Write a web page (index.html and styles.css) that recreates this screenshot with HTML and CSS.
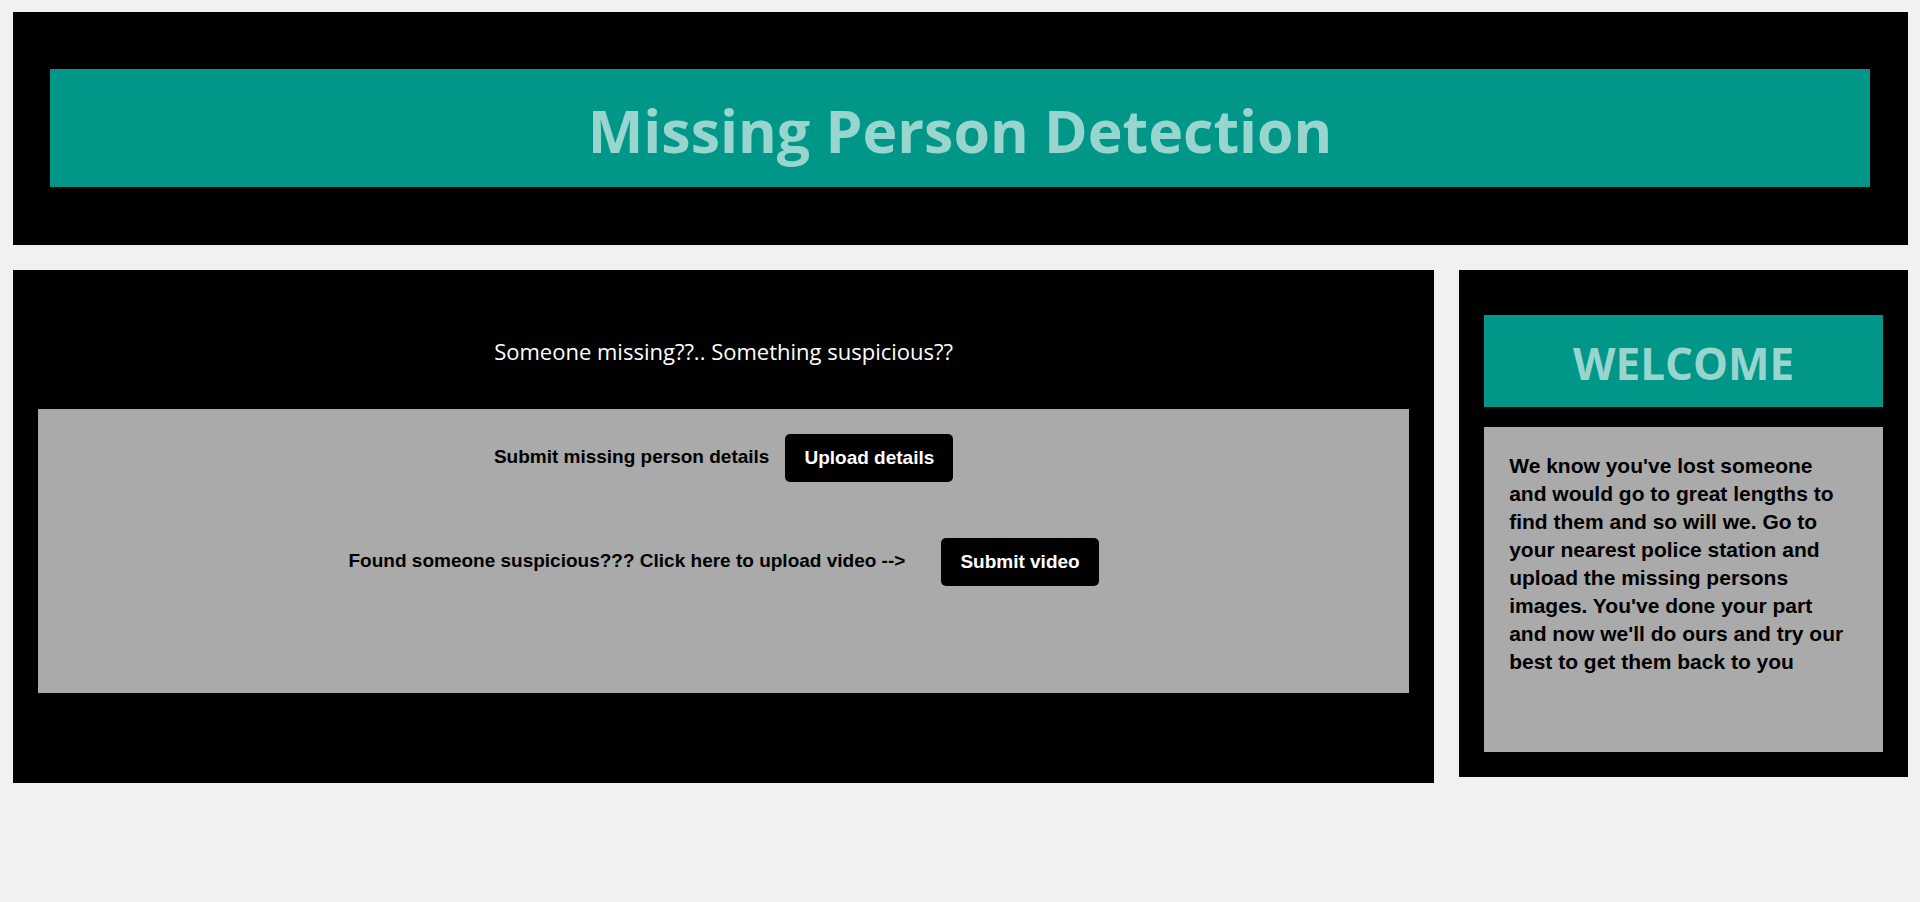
FILE: index.html
```html
<!DOCTYPE html>
<html lang="en">
<head>
<meta charset="utf-8">
<title>Missing Person Detection</title>
<link rel="stylesheet" href="styles.css">
</head>
<body>
<header class="header">
  <h1 class="banner banner-title"><span class="faded">Missing Person Detection</span></h1>
</header>
<div class="columns">
  <main class="main">
    <h2 class="question">Someone missing??.. Something suspicious??</h2>
    <div class="actions">
      <div class="action">
        <span class="label" id="details-label">Submit missing person details</span>
        <button class="button" type="button" aria-describedby="details-label">Upload details</button>
      </div>
      <div class="action action-video">
        <span class="label" id="video-label">Found someone suspicious??? Click here to upload video --&gt;</span>
        <button class="button" type="button" aria-describedby="video-label">Submit video</button>
      </div>
    </div>
  </main>
  <aside class="side">
    <h2 class="banner banner-welcome"><span class="faded">WELCOME</span></h2>
    <p class="message">We know you've lost someone and would go to great lengths to find them and so will we. Go to your nearest police station and upload the missing persons images. You've done your part and now we'll do ours and try our best to get them back to you</p>
  </aside>
</div>
</body>
</html>
```
FILE: styles.css
```css
* {
  box-sizing: border-box;
}

body {
  margin: 0;
  padding: 12px 12px 12px 13px;
  background: #f1f1f1;
  font-family: "Liberation Sans", Arial, sans-serif;
  color: #000;
}

.header {
  padding: 57px 38px 58px 37px;
  background: #000;
}

.banner {
  margin: 0;
  padding: 18px 16px 14px;
  background: #009688;
  color: #fff;
  font-family: "Segoe UI", "Open Sans", sans-serif;
  font-weight: 700;
  text-align: center;
}

.faded {
  opacity: 0.6;
}

.banner-title {
  font-size: 59px;
  line-height: 86px;
}

.banner-welcome {
  font-size: 44px;
  line-height: 60px;
}

.columns {
  display: grid;
  grid-template-columns: 76fr 24fr;
  align-items: start;
  gap: 25px;
  margin-top: 25px;
}

.main {
  padding: 63px 25px 90px;
  background: #000;
}

.question {
  margin: 0 0 40px;
  color: #fff;
  font-family: "Segoe UI", "Open Sans", sans-serif;
  font-size: 22px;
  font-weight: 400;
  line-height: 36px;
  text-align: center;
}

.actions {
  display: flex;
  flex-direction: column;
  gap: 56px;
  padding: 25px 25px 107px;
  background: #aaa;
  font-size: 19px;
  font-weight: 700;
}

.action {
  display: flex;
  justify-content: center;
  align-items: center;
  gap: 16px;
}

.action-video {
  gap: 36px;
}

.label {
  padding-bottom: 2px;
}

.button {
  padding: 12px 19px;
  border: 0;
  border-radius: 5px;
  background: #000;
  color: #fff;
  font: inherit;
  line-height: 24px;
  cursor: pointer;
}

.side {
  padding: 45px 25px 25px;
  background: #000;
}

.message {
  margin: 20px 0 0;
  padding: 25px 28px 76px 25px;
  background: #aaa;
  font-size: 21px;
  font-weight: 700;
  line-height: 28px;
}
```
